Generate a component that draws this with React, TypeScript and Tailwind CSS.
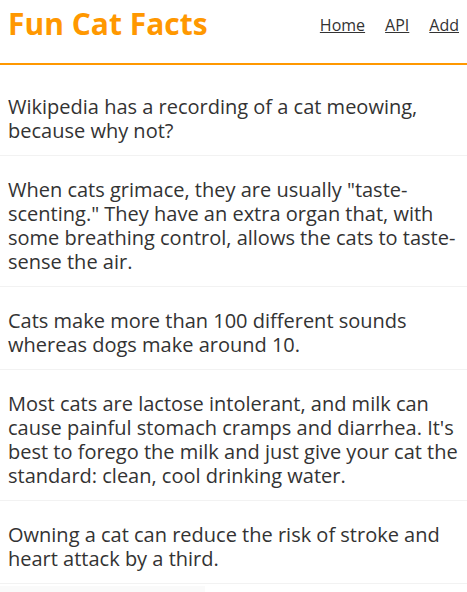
const facts = [
  "Wikipedia has a recording of a cat meowing, because why not?",
  'When cats grimace, they are usually "taste-scenting." They have an extra organ that, with some breathing control, allows the cats to taste-sense the air.',
  "Cats make more than 100 different sounds whereas dogs make around 10.",
  "Most cats are lactose intolerant, and milk can cause painful stomach cramps and diarrhea. It's best to forego the milk and just give your cat the standard: clean, cool drinking water.",
  "Owning a cat can reduce the risk of stroke and heart attack by a third.",
];

function Header() {
  return (
    <header className="flex h-[65px] items-start justify-between border-b-2 border-[#ff9800] pr-[8px] pl-2">
      <h1 className="mt-[6px] text-[30px] leading-[36px] font-bold text-[#ff9800]">
        Fun Cat Facts
      </h1>
      <nav className="mt-[13px] flex gap-[20px] text-[16px] text-[#333]">
        <a href="#" className="underline">
          Home
        </a>
        <a href="#" className="underline">
          API
        </a>
        <a href="#" className="underline">
          Add
        </a>
      </nav>
    </header>
  );
}

function Fact({ text }: { text: string }) {
  return (
    <div className="border-b border-[#f2f2f2] px-2 pt-[22px] pb-[12px] text-[20px] leading-[24px] text-[#333]">
      {text}
    </div>
  );
}

export default function App() {
  return (
    <div
      className="min-h-[592px] bg-white"
      style={{ fontFamily: '"Open Sans", sans-serif' }}
    >
      <Header />
      <div className="pt-2">
        {facts.map((f, i) => (
          <Fact key={i} text={f} />
        ))}
        <div className="mt-[2px] h-[20px] w-[205px] bg-[#fafafa]" />
      </div>
    </div>
  );
}
